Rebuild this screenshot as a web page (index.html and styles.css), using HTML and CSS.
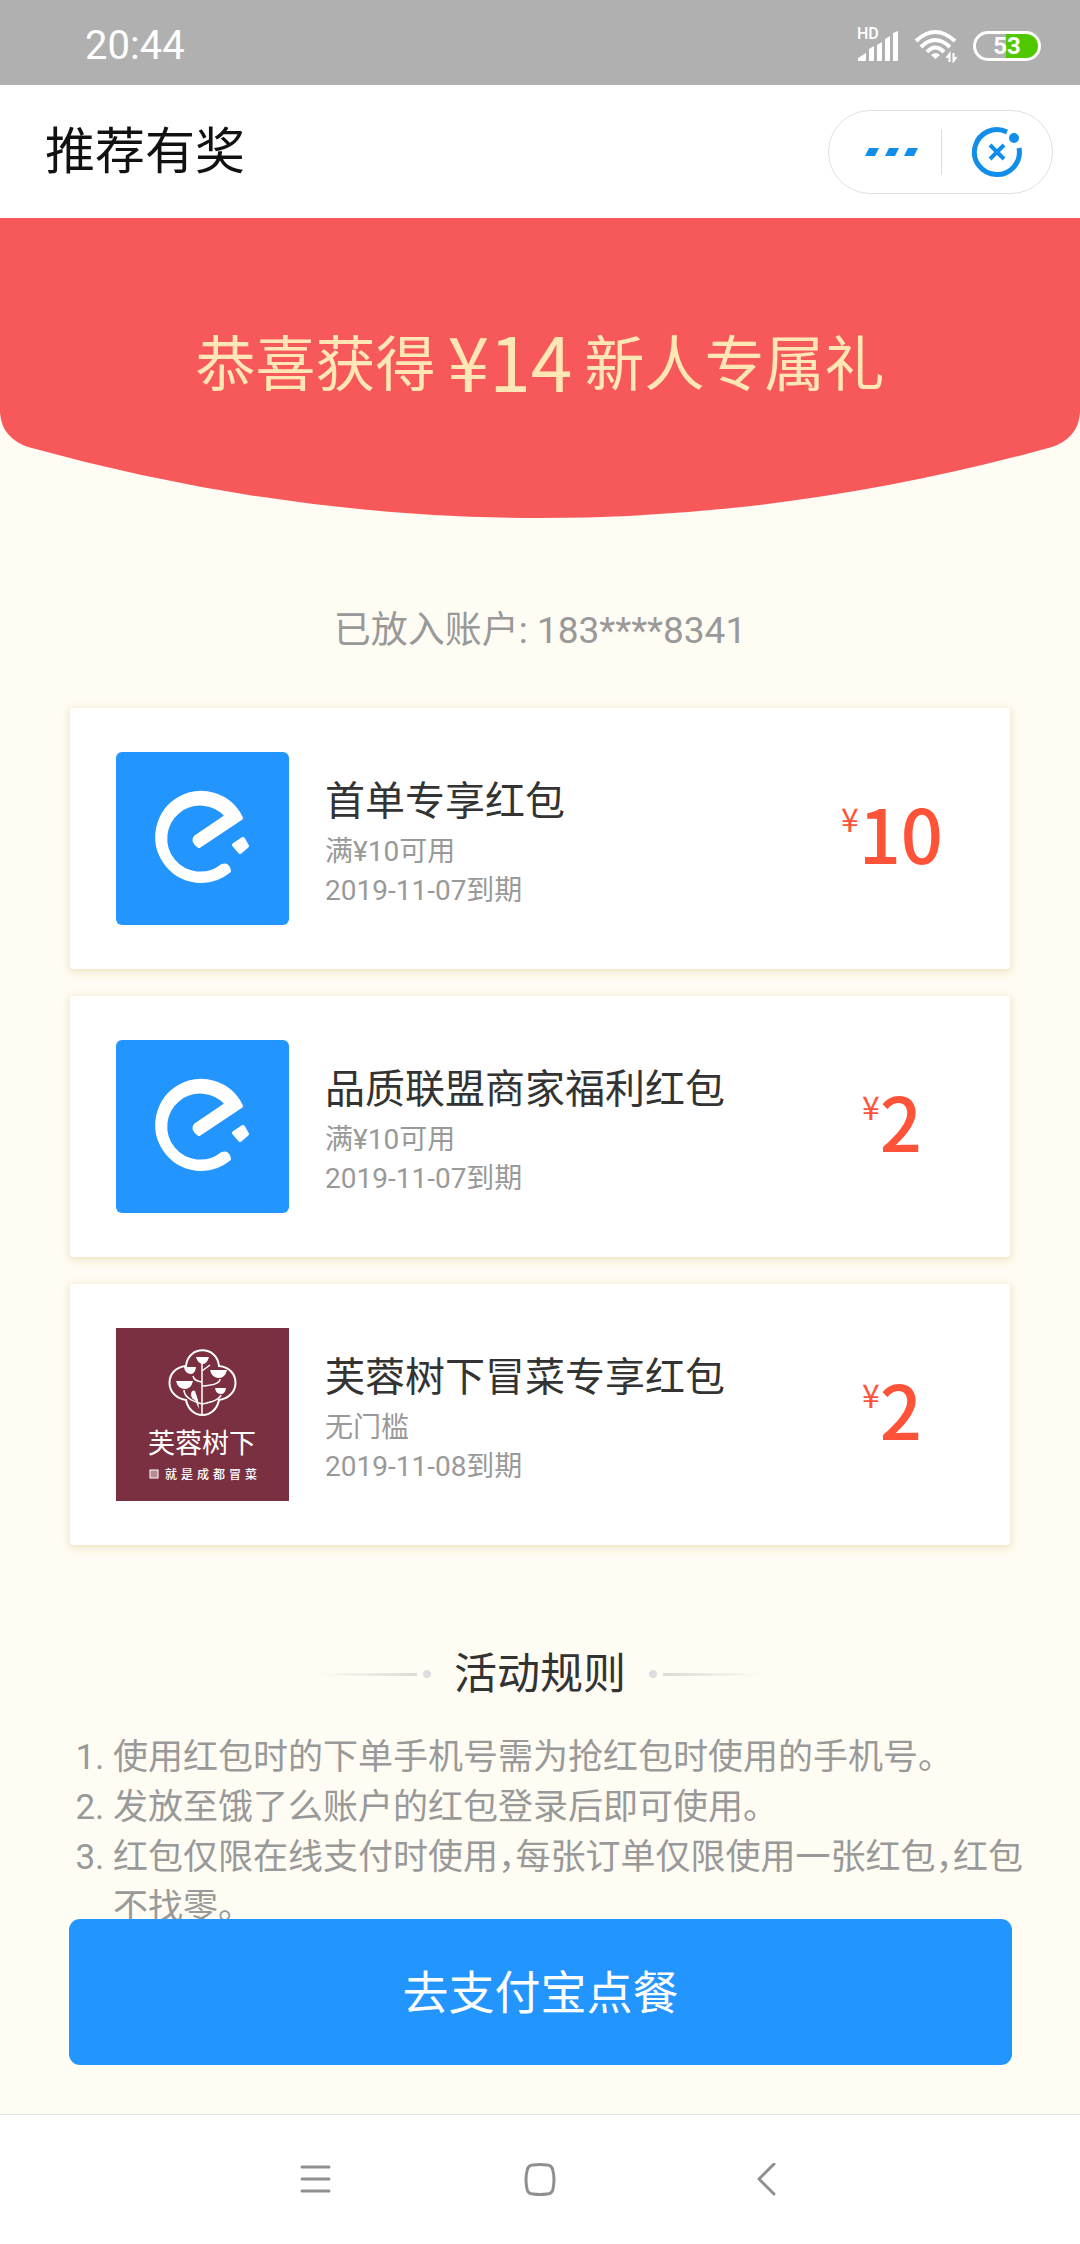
FILE: index.html
```html
<!DOCTYPE html>
<html lang="zh-CN">
<head>
    <meta charset="utf-8" />
    <meta name="viewport" content="width=device-width, initial-scale=1">
    <title>推荐有奖</title>
    <link rel="stylesheet" href="styles.css">
</head>
<body>
    <div class="status">
        <span class="time">20:44</span>
        <div class="status-icons">
            <svg class="signal" width="42" height="38" viewBox="0 -6 42 38" fill="#fff">
                <text x="0" y="9" class="hd">HD</text>
                <path d="M1 31v-3l8-5v8zM12 31V19l5-3v15zM20 31V15l5-3v19zM28 31V9l5-3v25zM36 31V3l5-2v30z" />
            </svg>
            <svg width="44" height="34" viewBox="0 0 44 34" fill="none" stroke="#fff" stroke-width="4">
                <path d="M2 12Q21 -6 41 12M7 18Q21 4 36 18M13 23Q21 14 30 23" />
                <path d="M17 26q4.500 -4 9 0l-4.500 4z" fill="#fff" stroke="none" />
                <path d="M35.500 33v-8l-3 4M39.500 24v8l3-4" stroke-width="2" />
            </svg>
            <div class="battery">53</div>
        </div>
    </div>

    <header class="header">
        <h1>推荐有奖</h1>
        <div class="capsule">
            <button type="button" class="more" aria-label="更多">
                <svg width="54" height="10" viewBox="0 0 54 10" fill="#108ee9">
                    <path d="M4 1h10l-4 8H0zM24 1h10l-4 8H20zM43 1h10l-4 8H39z" />
                </svg>
            </button>
            <button type="button" class="close" aria-label="关闭">
                <svg width="52" height="52" viewBox="0 0 52 52" fill="none" stroke="#108ee9">
                    <path d="M36 6A22.500 22.500 0 1 0 48 22" stroke-width="5" />
                    <path d="M19 19l14 14M33 19L19 33" stroke-width="4" />
                    <circle cx="43" cy="12" r="5" fill="#108ee9" stroke="none" />
                </svg>
            </button>
        </div>
    </header>

    <main class="content">
        <section class="hero">
            <svg class="hero-bg" viewBox="0 0 1080 300" preserveAspectRatio="none">
                <path d="M0 0H1080V195Q1078 220 1052 229Q796 300 540 300Q284 300 28 229Q2 220 0 195Z" fill="#f7595a" />
            </svg>
            <p class="hero-text"><span>恭喜获得</span><strong>¥14</strong><span>新人专属礼</span></p>
        </section>

        <p class="account">已放入账户: 183****8341</p>

        <div class="cards">
            <div class="card">
                <svg class="logo" viewBox="0 0 173 173">
                    <rect width="173" height="173" rx="6" fill="#2395ff" />
                    <g fill="#fff" stroke="#fff" stroke-width="4" stroke-linejoin="round">
                        <path d="M125 66A44 44 0 1 0 113 119Q112 112 106 114A35 35 0 1 1 111 64L80 85Q76 89 83 94Z" />
                        <path d="M118 93l9-6 4 7-7 6z" />
                    </g>
                </svg>
                <div class="info">
                    <h2>首单专享红包</h2>
                    <p>满¥10可用</p>
                    <p>2019-11-07到期</p>
                </div>
                <div class="price"><span>¥</span>10</div>
            </div>

            <div class="card">
                <svg class="logo" viewBox="0 0 173 173">
                    <rect width="173" height="173" rx="6" fill="#2395ff" />
                    <g fill="#fff" stroke="#fff" stroke-width="4" stroke-linejoin="round">
                        <path d="M125 66A44 44 0 1 0 113 119Q112 112 106 114A35 35 0 1 1 111 64L80 85Q76 89 83 94Z" />
                        <path d="M118 93l9-6 4 7-7 6z" />
                    </g>
                </svg>
                <div class="info">
                    <h2>品质联盟商家福利红包</h2>
                    <p>满¥10可用</p>
                    <p>2019-11-07到期</p>
                </div>
                <div class="price"><span>¥</span>2</div>
            </div>

            <div class="card">
                <svg class="logo" viewBox="0 0 173 173">
                    <rect width="173" height="173" fill="#7b3042" />
                    <!-- tree in a flower frame -->
                    <g fill="none" stroke="#fff" stroke-width="2">
                        <path d="M70 38C72 17 101 17 103 38C125 40 125 69 103 72C99 92 74 92 70 72C48 69 48 40 70 38Z" />
                        <path d="M86 35V87M77 48q1 5 9 6M104 51q0 6-18 7M68 62q0 9 18 14M105 67q-2 6-19 9M86 43l8-6" stroke-width="1.500" />
                    </g>
                    <g fill="#fff">
                        <path d="M80 29h13q-2 7-6 7-5 0-7-7zM68 39h12q-1 7-5 7-6 0-7-7zM94 42h17q-2 8-8 8-7 0-9-8zM60 53h17q-2 8-8 8-7 0-9-8zM99 60h11q-1 6-5 6-5 0-6-6z" />
                        <path d="M75 66q1-5 4-3l3 9 1 9-4-9q-4-1-4-6z" />
                        <text x="86" y="125" class="logo-name">芙蓉树下</text>
                        <rect x="34" y="142" width="8" height="8" fill="#b58a94" stroke="#fff" />
                        <text x="49" y="151" class="logo-sub">就是成都冒菜</text>
                    </g>
                </svg>
                <div class="info">
                    <h2>芙蓉树下冒菜专享红包</h2>
                    <p>无门槛</p>
                    <p>2019-11-08到期</p>
                </div>
                <div class="price"><span>¥</span>2</div>
            </div>
        </div>

        <h2 class="rules-title">活动规则</h2>
        <ol class="rules">
            <li>使用红包时的下单手机号需为抢红包时使用的手机号。</li>
            <li>发放至饿了么账户的红包登录后即可使用。</li>
            <li>红包仅限在线支付时使用，每张订单仅限使用一张红包，红包不找零。</li>
        </ol>

        <button type="button" class="go">去支付宝点餐</button>
    </main>

    <nav class="navbar">
        <button type="button" aria-label="菜单">
            <svg width="32" height="34" viewBox="0 0 32 34" fill="none" stroke="#8f8f8f" stroke-width="3" stroke-linecap="round">
                <path d="M3 4h27M3 16h27M3 28h27" />
            </svg>
        </button>
        <button type="button" aria-label="主页">
            <svg width="32" height="34" viewBox="0 0 32 34" fill="none" stroke="#8f8f8f" stroke-width="3">
                <path d="M9 2Q16 1 23 2Q28 2 29 8Q31 16 29 26Q28 31 23 31Q16 32 9 31Q4 31 3 26Q1 16 3 8Q4 2 9 2Z" />
            </svg>
        </button>
        <button type="button" aria-label="返回">
            <svg width="32" height="34" viewBox="0 0 32 34" fill="none" stroke="#8f8f8f" stroke-width="3" stroke-linecap="round" stroke-linejoin="round">
                <path d="M25 1L10 16L25 31" />
            </svg>
        </button>
    </nav>
</body>
</html>
```

FILE: styles.css
```css
* {
    margin: 0;
    padding: 0;
    box-sizing: border-box;
}

body {
    display: flex;
    flex-direction: column;
    height: 100vh;
    background: #fff;
    font-family: Roboto, "Noto Sans CJK SC", sans-serif;
    color: #333;
}

button {
    border: none;
    background: none;
    font: inherit;
    cursor: pointer;
}

svg {
    display: block;
}

h1,
h2 {
    font-weight: 400;
}

.status {
    flex: none;
    display: flex;
    justify-content: space-between;
    align-items: center;
    height: 85px;
    padding: 6px 39px 0 85px;
    background: #b0b0b0;
    color: #fff;
}

.time {
    font-size: 40px;
}

.status-icons {
    display: flex;
    align-items: center;
    gap: 15px;
}

.signal {
    margin-top: -6px;
}

.hd {
    font-size: 16px;
    font-weight: 500;
}

.battery {
    width: 68px;
    height: 30px;
    border: 3px solid #fff;
    border-radius: 15px;
    background: linear-gradient(to right, #b0b0b0 48%, #4fc800 48%);
    font-size: 24px;
    font-weight: 700;
    line-height: 24px;
    text-align: center;
}

.header {
    flex: none;
    display: flex;
    justify-content: space-between;
    align-items: center;
    height: 133px;
    padding: 0 27px 0 45px;
}

.header h1 {
    font-size: 50px;
    line-height: 60px;
    color: #111;
}

.capsule {
    display: flex;
    align-items: center;
    width: 225px;
    height: 84px;
    border: 1px solid #e0e0e0;
    border-radius: 42px;
}

.capsule button {
    flex: none;
    display: flex;
    justify-content: center;
    align-items: center;
    width: 50%;
    height: 46px;
}

.capsule .more {
    padding-left: 14px;
}

.capsule .close {
    border-left: 1px solid #ddd;
}

.content {
    flex: 1;
    position: relative;
    min-height: 0;
    overflow: hidden;
    background: #fffcf3;
}

.hero {
    position: relative;
    height: 300px;
    padding-top: 92px;
}

.hero-bg {
    position: absolute;
    top: 0;
    left: 0;
    width: 100%;
    height: 100%;
}

.hero-text {
    position: relative;
    display: flex;
    justify-content: center;
    align-items: center;
    gap: 12px;
    font-family: "Noto Sans CJK SC", sans-serif;
    font-size: 60px;
    line-height: 100px;
    color: #ffe7b5;
}

.hero-text strong {
    font-size: 75px;
    font-weight: 400;
}

.account {
    padding-top: 87px;
    font-size: 37px;
    line-height: 52px;
    text-align: center;
    color: #999;
}

.cards {
    display: flex;
    flex-direction: column;
    gap: 27px;
    padding: 51px 70px 0;
}

.card {
    display: flex;
    align-items: center;
    height: 261px;
    padding-left: 46px;
    border-radius: 3px;
    background: #fff;
    box-shadow: 0 2px 8px 1px rgba(190, 160, 70, 0.28);
}

.logo {
    flex: none;
    width: 173px;
    height: 173px;
}

.logo-name {
    font-size: 27px;
    text-anchor: middle;
}

.logo-sub {
    font-size: 12px;
    font-weight: 500;
    letter-spacing: 4px;
}

.info {
    flex: 1;
    padding-top: 4px;
    padding-left: 36px;
}

.info h2 {
    font-size: 40px;
    line-height: 60px;
}

.info p {
    font-size: 28px;
    line-height: 39px;
    color: #999;
}

.price {
    display: flex;
    justify-content: center;
    align-items: flex-start;
    width: 236px;
    padding-bottom: 14px;
    font-family: "Noto Sans CJK SC", sans-serif;
    font-size: 74px;
    font-weight: 500;
    line-height: 100px;
    color: #ff5339;
}

.price span {
    font-size: 32px;
    font-weight: 400;
    line-height: 72px;
}

.rules-title {
    display: flex;
    justify-content: center;
    align-items: center;
    gap: 23px;
    padding-top: 98px;
    font-size: 43px;
    line-height: 62px;
}

/* dot and fading line on both sides of the title */
.rules-title::before,
.rules-title::after {
    content: "";
    width: 112px;
    height: 8px;
    background:
        radial-gradient(circle, #e0dce0 4px, transparent 4px) right center / 8px 8px no-repeat,
        linear-gradient(to right, transparent, #dddad5) left center / 98px 3px no-repeat;
}

.rules-title::after {
    background:
        radial-gradient(circle, #e0dce0 4px, transparent 4px) left center / 8px 8px no-repeat,
        linear-gradient(to left, transparent, #dddad5) right center / 98px 3px no-repeat;
}

.rules {
    padding: 28px 40px 0 113px;
    font-size: 35px;
    font-feature-settings: "halt";
    line-height: 50px;
    color: #999;
}

.go {
    position: absolute;
    left: 69px;
    right: 68px;
    bottom: 49px;
    height: 146px;
    padding-bottom: 6px;
    border-radius: 11px;
    background: #2395ff;
    font-size: 46px;
    color: #fff;
}

.navbar {
    flex: none;
    display: flex;
    justify-content: center;
    align-items: center;
    gap: 193px;
    height: 130px;
    border-top: 1px solid #e4e6e0;
}
```
